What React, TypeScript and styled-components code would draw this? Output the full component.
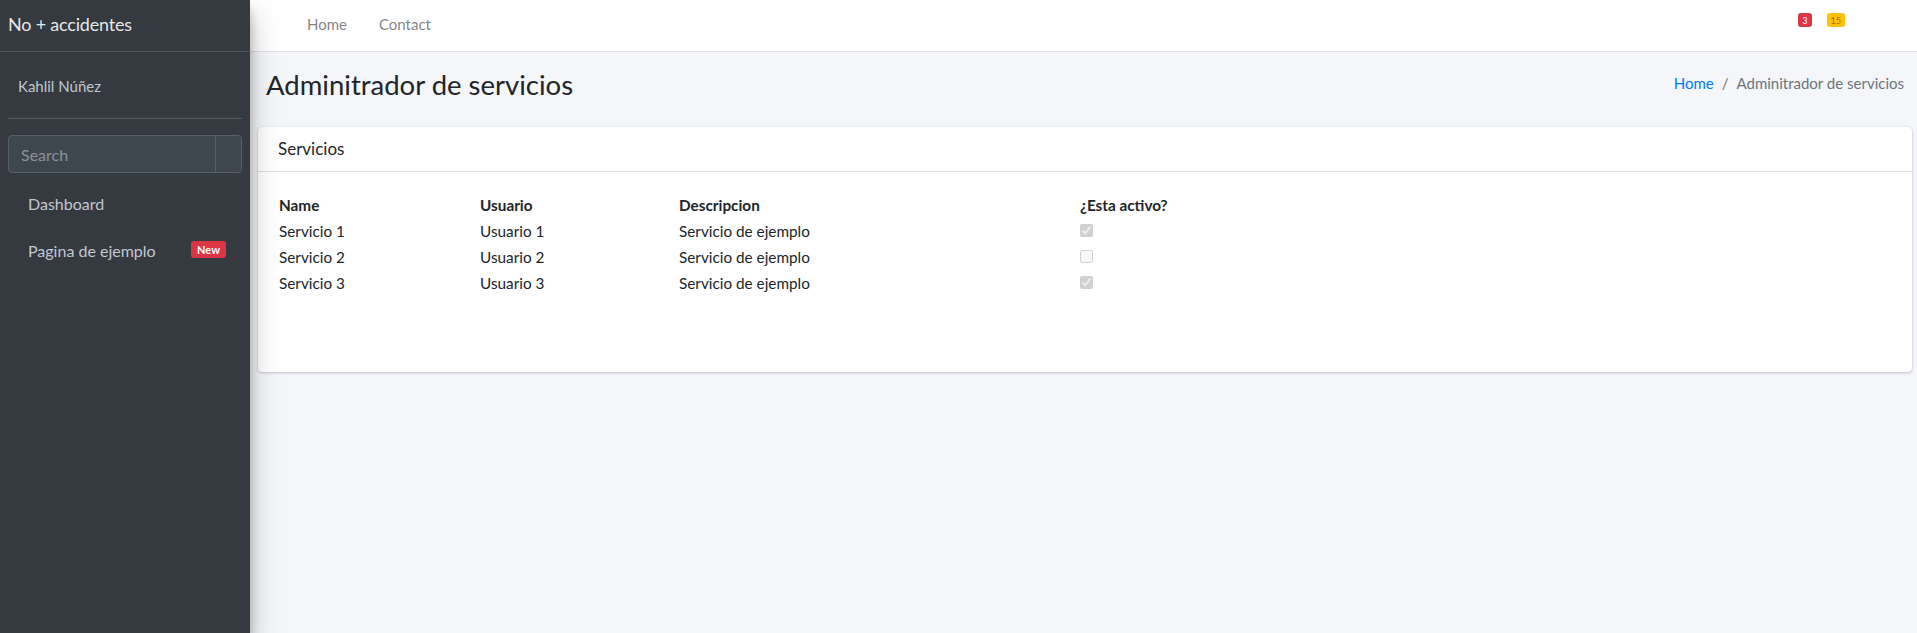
import React from "react";
import styled, { createGlobalStyle } from "styled-components";

const Global = createGlobalStyle`
  html, body { margin: 0; padding: 0; }
  body {
    font-family: "Lato", "Liberation Sans", sans-serif;
    font-size: 16px;
    line-height: 1.5;
    color: #212529;
    background: #f4f6f9;
  }
  * { box-sizing: border-box; }
`;

const Wrapper = styled.div`
  display: flex;
  min-height: 633px;
`;

const Sidebar = styled.aside`
  width: 250px;
  flex: 0 0 250px;
  background: #343a40;
  box-shadow: 0 14px 28px rgba(0, 0, 0, 0.25), 0 10px 10px rgba(0, 0, 0, 0.22);
  position: relative;
  z-index: 2;
  display: flex;
  flex-direction: column;
`;

const Brand = styled.div`
  height: 52px;
  border-bottom: 1px solid #4b545c;
  display: flex;
  align-items: center;
  padding: 0 8px 2px;
  font-size: 18px;
  font-weight: 400;
  letter-spacing: -0.2px;
  color: rgba(255, 255, 255, 0.9);
`;

const SidebarInner = styled.div`
  padding: 0 8px;
  display: flex;
  flex-direction: column;
`;

const UserPanel = styled.div`
  height: 67px;
  border-bottom: 1px solid #4f5962;
  display: flex;
  align-items: center;
  padding: 2px 10px 0;
  color: #c2c7d0;
  font-size: 15px;
`;

const SearchGroup = styled.div`
  margin-top: 16px;
  height: 38px;
  display: flex;
  border: 1px solid #56606a;
  border-radius: 4px;
  background: #3f474e;
  overflow: hidden;
`;

const SearchInput = styled.input`
  flex: 1;
  min-width: 0;
  background: transparent;
  border: none;
  outline: none;
  color: #fff;
  padding: 0 12px;
  font-family: inherit;
  font-size: 16px;
  &::placeholder { color: #8a939b; }
`;

const SearchButton = styled.button`
  width: 26px;
  border: none;
  border-left: 1px solid #56606a;
  background: #3f474e;
`;

const NavList = styled.ul`
  list-style: none;
  margin: 7px 0 0;
  padding: 0;
`;

const NavItem = styled.li`
  height: 47px;
  display: flex;
  align-items: center;
  justify-content: space-between;
  padding: 0 16px 0 20px;
  color: #c2c7d0;
  font-size: 16px;
`;

const Badge = styled.span<{ $bg: string; $fg: string }>`
  display: inline-flex;
  align-items: center;
  justify-content: center;
  background: ${(p) => p.$bg};
  color: ${(p) => p.$fg};
  border-radius: 3px;
  font-weight: 700;
  line-height: 1;
`;

const NewBadge = styled(Badge)`
  font-size: 11px;
  height: 17px;
  padding: 0 6px;
  margin-top: -3px;
`;

const Main = styled.div`
  flex: 1;
  display: flex;
  flex-direction: column;
  min-width: 0;
`;

const Navbar = styled.nav`
  height: 52px;
  background: #fff;
  border-bottom: 1px solid #dee2e6;
  display: flex;
  align-items: center;
  justify-content: space-between;
  padding: 0 72px 2px 57px;
`;

const NavLinks = styled.div`
  display: flex;
  gap: 32px;
`;

const NavLink = styled.a`
  color: rgba(0, 0, 0, 0.5);
  text-decoration: none;
  font-size: 15px;
`;

const Counters = styled.div`
  display: flex;
  gap: 15px;
  align-self: flex-start;
  margin-top: 13px;
`;

const Counter = styled(Badge)`
  font-size: 9px;
  font-weight: 400;
  height: 14px;
  padding: 0 4px;
  min-width: 13px;
`;

const ContentHeader = styled.div`
  display: flex;
  align-items: center;
  justify-content: space-between;
  height: 74px;
  padding: 0 13px 8px 16px;
`;

const Title = styled.h1`
  margin: 0;
  font-size: 27.5px;
  font-weight: 400;
  color: #212529;
`;

const Breadcrumb = styled.ol`
  list-style: none;
  margin: 0 0 4px;
  padding: 0;
  display: flex;
  gap: 8px;
  font-size: 15px;
  color: #6c757d;
`;

const Crumb = styled.li<{ $link?: boolean }>`
  color: ${(p) => (p.$link ? "#007bff" : "#6c757d")};
`;

const Sep = styled.li`
  color: #6c757d;
`;

const Card = styled.section`
  margin: 1px 5px 0 8px;
  background: #fff;
  border-radius: 4px;
  box-shadow: 0 0 1px rgba(0, 0, 0, 0.125), 0 1px 3px rgba(0, 0, 0, 0.2);
`;

const CardHeader = styled.div`
  height: 45px;
  border-bottom: 1px solid rgba(0, 0, 0, 0.125);
  display: flex;
  align-items: center;
  padding: 0 20px;
  font-size: 17px;
`;

const CardBody = styled.div`
  padding: 20px;
  min-height: 200px;
`;

const Table = styled.table`
  border-collapse: collapse;
  font-size: 15.3px;
`;

const Th = styled.th<{ $w?: number }>`
  text-align: left;
  font-weight: 700;
  padding: 1px;
  height: 26px;
  width: ${(p) => (p.$w ? `${p.$w}px` : "auto")};
`;

const Td = styled.td`
  padding: 1px;
  height: 26px;
  color: #212529;
`;

const Check = styled.input`
  margin: 0;
  width: 13px;
  height: 13px;
  vertical-align: middle;
  position: relative;
  top: -2px;
`;

const rows = [
  { name: "Servicio 1", user: "Usuario 1", desc: "Servicio de ejemplo", active: true },
  { name: "Servicio 2", user: "Usuario 2", desc: "Servicio de ejemplo", active: false },
  { name: "Servicio 3", user: "Usuario 3", desc: "Servicio de ejemplo", active: true },
];

export default function App() {
  return (
    <>
      <Global />
      <Wrapper>
        <Sidebar>
          <Brand>No + accidentes</Brand>
          <SidebarInner>
            <UserPanel>Kahlil Núñez</UserPanel>
            <SearchGroup>
              <SearchInput placeholder="Search" />
              <SearchButton aria-label="search" />
            </SearchGroup>
            <NavList>
              <NavItem>Dashboard</NavItem>
              <NavItem>
                Pagina de ejemplo
                <NewBadge $bg="#dc3545" $fg="#fff">New</NewBadge>
              </NavItem>
            </NavList>
          </SidebarInner>
        </Sidebar>
        <Main>
          <Navbar>
            <NavLinks>
              <NavLink href="#">Home</NavLink>
              <NavLink href="#">Contact</NavLink>
            </NavLinks>
            <Counters>
              <Counter $bg="#dc3545" $fg="#fff">3</Counter>
              <Counter $bg="#ffc107" $fg="#9a7300">15</Counter>
            </Counters>
          </Navbar>
          <ContentHeader>
            <Title>Adminitrador de servicios</Title>
            <Breadcrumb>
              <Crumb $link>Home</Crumb>
              <Sep>/</Sep>
              <Crumb>Adminitrador de servicios</Crumb>
            </Breadcrumb>
          </ContentHeader>
          <Card>
            <CardHeader>Servicios</CardHeader>
            <CardBody>
              <Table>
                <thead>
                  <tr>
                    <Th $w={201}>Name</Th>
                    <Th $w={199}>Usuario</Th>
                    <Th $w={401}>Descripcion</Th>
                    <Th>¿Esta activo?</Th>
                  </tr>
                </thead>
                <tbody>
                  {rows.map((r) => (
                    <tr key={r.name}>
                      <Td>{r.name}</Td>
                      <Td>{r.user}</Td>
                      <Td>{r.desc}</Td>
                      <Td>
                        <Check type="checkbox" disabled defaultChecked={r.active} />
                      </Td>
                    </tr>
                  ))}
                </tbody>
              </Table>
            </CardBody>
          </Card>
        </Main>
      </Wrapper>
    </>
  );
}
